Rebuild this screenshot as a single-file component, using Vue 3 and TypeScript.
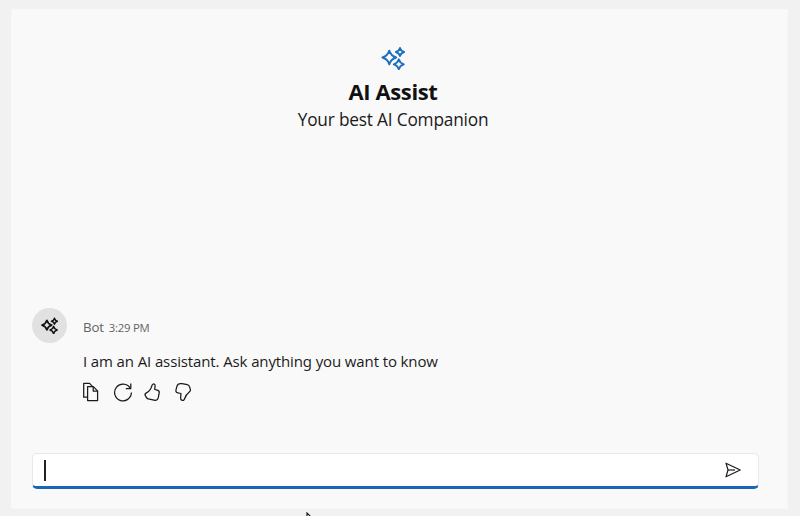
<script setup lang="ts">
import { ref } from 'vue'

interface Message {
  author: string
  time: string
  text: string
}

const title = 'AI Assist'
const subtitle = 'Your best AI Companion'
const messages = ref<Message[]>([
  { author: 'Bot', time: '3:29 PM', text: 'I am an AI assistant. Ask anything you want to know' },
])
</script>

<template>
  <main class="window">
    <section class="panel">
      <header class="intro">
        <svg class="logo" viewBox="0 0 24 24">
          <path d="M8.3 4.6Q9.8 10 15.2 11.5Q9.8 13 8.3 18.4Q6.8 13 1.4 11.5Q6.8 10 8.3 4.6Z" />
          <path d="M19 1.9Q19.9 5.1 23.1 6Q19.9 6.9 19 10.1Q18.1 6.9 14.9 6Q18.1 5.1 19 1.9Z" />
          <path d="M17.8 13.3Q18.9 17.2 22.8 18.3Q18.9 19.4 17.8 23.3Q16.7 19.4 12.8 18.3Q16.7 17.2 17.8 13.3Z" />
        </svg>
        <h1>{{ title }}</h1>
        <p>{{ subtitle }}</p>
      </header>

      <article v-for="(m, i) in messages" :key="i" class="message">
        <div class="avatar">
          <svg viewBox="0 0 24 24">
            <path d="M8.3 4.6Q9.8 10 15.2 11.5Q9.8 13 8.3 18.4Q6.8 13 1.4 11.5Q6.8 10 8.3 4.6Z" />
            <path d="M19 1.9Q19.9 5.1 23.1 6Q19.9 6.9 19 10.1Q18.1 6.9 14.9 6Q18.1 5.1 19 1.9Z" />
            <path d="M17.8 13.3Q18.9 17.2 22.8 18.3Q18.9 19.4 17.8 23.3Q16.7 19.4 12.8 18.3Q16.7 17.2 17.8 13.3Z" />
          </svg>
        </div>
        <div class="body">
          <div class="meta"><span class="author">{{ m.author }}</span><span class="time">{{ m.time }}</span></div>
          <p class="text">{{ m.text }}</p>
          <div class="actions">
            <svg viewBox="0 0 20 20">
              <path d="M5.6 15.2H1.7V1.4H7.6L10.6 4.6" />
              <path d="M5.6 4.6H11.3L15.6 8.9V18.6H5.6Z" />
              <path d="M11.2 4.8V9H15.4" />
            </svg>
            <svg viewBox="0 0 20 20">
              <path d="M17.2 6.1A8.4 8.4 0 1 0 18.4 10.6" />
              <path d="M17.8 1.6V6.5H12.8" />
            </svg>
            <svg viewBox="0 0 20 20">
              <path d="M9.9 2.2C11.2 1.6 12.2 2.4 12.1 4L11.7 7.5L14.2 8.1C15.7 8.5 16.5 9.6 16.2 11L15.2 15.9C14.7 18 13.2 18.7 11.1 18.2L5.2 16.9C4.3 16.7 3.7 16 3.2 15.1L2.2 13.4C1.7 12.2 2.4 11.2 3.8 10.6C6.5 9.4 8 7.1 8.9 3.7C9.1 2.9 9.3 2.5 9.9 2.2Z" />
            </svg>
            <svg viewBox="0 0 20 20">
              <path d="M8.1 18.3C9.3 18.7 10.2 18 10.6 16.8C11.6 13.6 13.1 11.6 15.3 10C16.4 9.2 16.7 8.4 16.4 7.4L15.4 4.5C15.1 3.5 14.3 2.9 13.3 2.6L8 1.7C5.3 1.2 3.5 2.2 2.9 4.4L2 7.8C1.6 9.5 2.3 10.6 3.8 10.9L7 11.5L6.6 15.7C6.5 17.1 6.9 18 8.1 18.3Z" />
            </svg>
          </div>
        </div>
      </article>

      <div class="composer">
        <span class="caret"></span>
        <svg class="send" viewBox="0 0 18 18">
          <path d="M2 2.2L16.2 9L2 15.8L4 9Z" />
          <path d="M4 9H11" />
        </svg>
      </div>
    </section>
    <svg class="pointer" viewBox="0 0 12 18"><path d="M1 1V15L4.2 11.8L6.2 16.5L8.5 15.5L6.5 11H11Z" /></svg>
  </main>
</template>

<style>
body {
  background: #f1f1f1;
  overflow: hidden;
}
</style>

<style scoped>
.window {
  box-sizing: border-box;
  position: relative;
  height: 516px;
  padding: 9px 12px 7px 11px;
  overflow: hidden;
  background: #f1f1f1;
  color: #1b1b1b;
  font-family: "Open Sans", "Noto Sans", sans-serif;
  font-feature-settings: "ss02";
}
.panel {
  box-sizing: border-box;
  display: flex;
  flex-direction: column;
  height: 500px;
  padding: 36px 28px 19px 20px;
  border: 1px solid #f7f7f7;
  background: #f9f9f9;
}
.panel svg {
  display: block;
  fill: none;
  stroke: currentColor;
  stroke-linejoin: round;
}
.intro {
  display: flex;
  flex-direction: column;
  align-items: center;
  height: 263px;
  margin-right: 5px;
}
.logo {
  width: 24px;
  height: 24px;
  color: #1c6fbf;
  stroke-width: 1.9;
}
h1 {
  margin: 6px 0 1px;
  font-size: 22px;
  line-height: 30px;
  font-weight: 700;
  letter-spacing: -0.4px;
  color: #111;
  white-space: nowrap;
}
.intro p {
  margin: 0;
  font-size: 17.3px;
  line-height: 25px;
  letter-spacing: -0.2px;
  white-space: nowrap;
}
.message {
  display: flex;
  gap: 16px;
  height: 145px;
}
.avatar {
  display: flex;
  align-items: center;
  justify-content: center;
  width: 35px;
  height: 35px;
  border-radius: 50%;
  background: #e1e1e1;
}
.avatar svg {
  width: 17px;
  height: 17px;
  stroke-width: 2.3;
  color: #111;
}
.meta {
  display: flex;
  align-items: baseline;
  gap: 5px;
  padding: 8px 0 0;
  height: 22px;
  line-height: 22px;
  color: #646464;
}
.author {
  font-size: 13.3px;
  letter-spacing: -0.2px;
}
.time {
  font-size: 11.3px;
  letter-spacing: -0.2px;
}
.text {
  margin: 12px 0 0;
  font-size: 15px;
  line-height: 22px;
  letter-spacing: -0.12px;
  white-space: nowrap;
}
.actions {
  display: flex;
  gap: 11px;
  margin-top: 10px;
  margin-left: -1px;
}
.actions svg {
  width: 20px;
  height: 20px;
  stroke-width: 1.25;
}
.actions svg:not(:first-child) {
  margin-right: 0;
  margin-left: -0.3px;
}
.composer {
  box-sizing: border-box;
  display: flex;
  align-items: center;
  justify-content: space-between;
  height: 36px;
  padding: 0 16px 0 11px;
  border: 1px solid #e9e9e9;
  border-bottom: 3px solid #1966b3;
  border-radius: 5px;
  background: #fff;
}
.caret {
  width: 1.5px;
  height: 21px;
  background: #222;
}
.send {
  width: 18px;
  height: 18px;
  stroke-width: 1.2;
}
.pointer {
  position: absolute;
  left: 306px;
  top: 512px;
  width: 12px;
  height: 18px;
  fill: #fff;
  stroke: #222;
  stroke-width: 1.2;
}
</style>
